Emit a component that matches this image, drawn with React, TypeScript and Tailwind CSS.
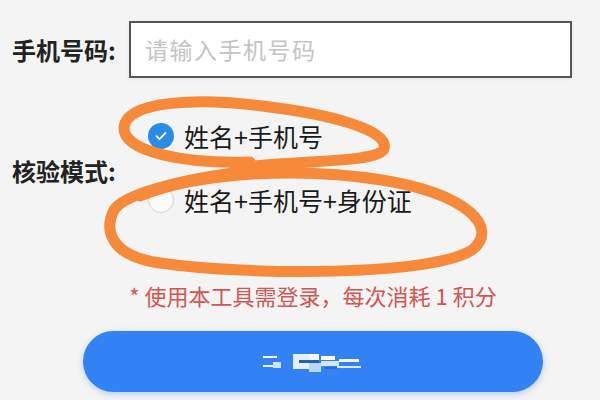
import { useState } from 'react';

const options = ['姓名+手机号', '姓名+手机号+身份证'];

function Radio({ checked }: { checked: boolean }) {
  if (checked) {
    return (
      <span className="flex h-[26px] w-[26px] items-center justify-center rounded-full bg-[#2d8be8]">
        <svg width="14" height="14" viewBox="0 0 14 14" fill="none">
          <path d="M2.5 7.2l3 3 6-6.2" stroke="#fff" strokeWidth="1.8" strokeLinecap="round" strokeLinejoin="round" />
        </svg>
      </span>
    );
  }
  return <span className="h-[26px] w-[26px] rounded-full border-[1.5px] border-[#d4d4d4] bg-[#fafafa]" />;
}

export default function App() {
  const [mode, setMode] = useState(0);

  return (
    <div
      className="relative h-[400px] w-[600px] overflow-hidden bg-[#f4f4f4] text-[#222]"
      style={{ fontFamily: '"Noto Sans CJK SC", "Noto Sans", sans-serif' }}
    >
      {/* Phone number */}
      <div className="flex items-center pt-[21px]">
        <label className="w-[129px] pl-[12px] text-[24px] font-bold leading-none">手机号码:</label>
        <div className="flex h-[57px] w-[443px] items-center border-2 border-[#555] bg-white pl-[14px] shadow-[0_1px_4px_rgba(0,0,0,0.06)]">
          <span className="text-[23px] tracking-[1.5px] text-[#c4c4c4]">请输入手机号码</span>
        </div>
      </div>

      {/* Verify mode */}
      <div className="mt-[38px] flex items-center">
        <span className="mt-[6px] w-[148px] pl-[12px] text-[24px] font-bold leading-none">核验模式:</span>
        <div className="flex flex-col gap-[24px]">
          {options.map((opt, i) => (
            <button
              key={opt}
              onClick={() => setMode(i)}
              className="flex h-[40px] items-center gap-[10px]"
            >
              <Radio checked={mode === i} />
              <span className="text-[25px] leading-none text-[#1a1a1a]">{opt}</span>
            </button>
          ))}
        </div>
      </div>

      {/* Notice */}
      <div className="ml-[83px] mt-[64px] w-[460px] text-center text-[22px] leading-none text-[#d25552]">
        * 使用本工具需登录，每次消耗 1 积分
      </div>

      {/* Submit */}
      <button className="ml-[83px] mt-[25px] flex h-[61px] w-[460px] items-center justify-center rounded-full bg-[#3382f4] shadow-[0_2px_6px_rgba(51,130,244,0.35)]">
        <svg width="100" height="22" viewBox="0 0 100 22">
          <rect x="0" y="5" width="14" height="2" fill="#fff" />
          <rect x="0" y="14" width="16" height="2" fill="#eaf2fe" />
          <rect x="10" y="11" width="8" height="6" fill="#cfe0fb" />
          <rect x="30" y="3" width="16" height="15" fill="#e4eefc" />
          <rect x="36" y="9" width="20" height="3" fill="#1e5fbf" />
          <rect x="46" y="3" width="10" height="6" fill="#f5f9ff" />
          <rect x="46" y="12" width="12" height="9" fill="#bcd4f6" />
          <rect x="58" y="5" width="14" height="4" fill="#fff" />
          <rect x="58" y="10" width="18" height="5" fill="#d6e5fb" />
          <rect x="62" y="16" width="12" height="2" fill="#2c6cc9" />
          <rect x="76" y="8" width="20" height="3" fill="#f0f6ff" />
          <rect x="74" y="15" width="24" height="2" fill="#dbe8fc" />
        </svg>
      </button>

      {/* Hand-drawn annotation */}
      <svg className="pointer-events-none absolute inset-0" width="600" height="400" viewBox="0 0 600 400" fill="none">
        <path
          d="M250 162 C185 164 122 152 124 127 C127 100 200 98 262 106 C330 114 390 130 384 149 C378 163 300 160 236 168"
          stroke="#f7893a"
          strokeWidth="11"
          strokeLinecap="round"
        />
        <path
          d="M140 196 C200 172 300 167 382 180 C468 194 500 228 472 250 C432 276 250 276 160 263 C110 256 104 230 114 210 C124 194 180 180 240 172"
          stroke="#f7893a"
          strokeWidth="11"
          strokeLinecap="round"
        />
      </svg>
    </div>
  );
}
